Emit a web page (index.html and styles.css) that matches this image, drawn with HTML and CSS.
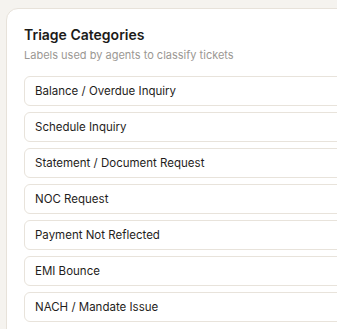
FILE: index.html
```html
<!DOCTYPE html>
<html lang="en">
<head>
    <meta charset="UTF-8">
    <title>Triage Categories</title>
    <link rel="stylesheet" href="styles.css">
</head>
<body>
<div class="carte">
    <h2 class="carte-titre">Triage Categories</h2>
    <p class="carte-sous-titre">Labels used by agents to classify tickets</p>
    <div class="liste-categories">
        <div class="categorie">Balance / Overdue Inquiry</div>
        <div class="categorie">Schedule Inquiry</div>
        <div class="categorie">Statement / Document Request</div>
        <div class="categorie">NOC Request</div>
        <div class="categorie">Payment Not Reflected</div>
        <div class="categorie">EMI Bounce</div>
        <div class="categorie">NACH / Mandate Issue</div>
    </div>
</div>
</body>
</html>
```

FILE: styles.css
```css
body {
    margin: 0;
    padding: 8px 0 0 6px;
    background-color: #f5f3ef;
    font-family: Inter, "Noto Sans", sans-serif;
    overflow: hidden;
    height: 100vh;
    box-sizing: border-box;
}

.carte {
    background: #ffffff;
    border: 1px solid #e7e2da;
    border-radius: 12px;
    width: 380px;
    min-height: 400px;
    padding: 16px 0 0 17px;
    box-sizing: border-box;
}

.carte-titre {
    margin: 0;
    font-size: 14px;
    line-height: 20px;
    font-weight: 600;
    color: #1c1b19;
}

.carte-sous-titre {
    margin: 3px 0 0 0;
    font-size: 11px;
    line-height: 14px;
    color: #9b9893;
}

.liste-categories {
    display: flex;
    flex-direction: column;
    gap: 6px;
    margin-top: 14px;
}

.categorie {
    border: 1px solid #e8e3db;
    border-radius: 6px;
    height: 30px;
    box-sizing: border-box;
    padding: 0 10px;
    display: flex;
    align-items: center;
    font-size: 11.5px;
    color: #1f1e1c;
}
```
